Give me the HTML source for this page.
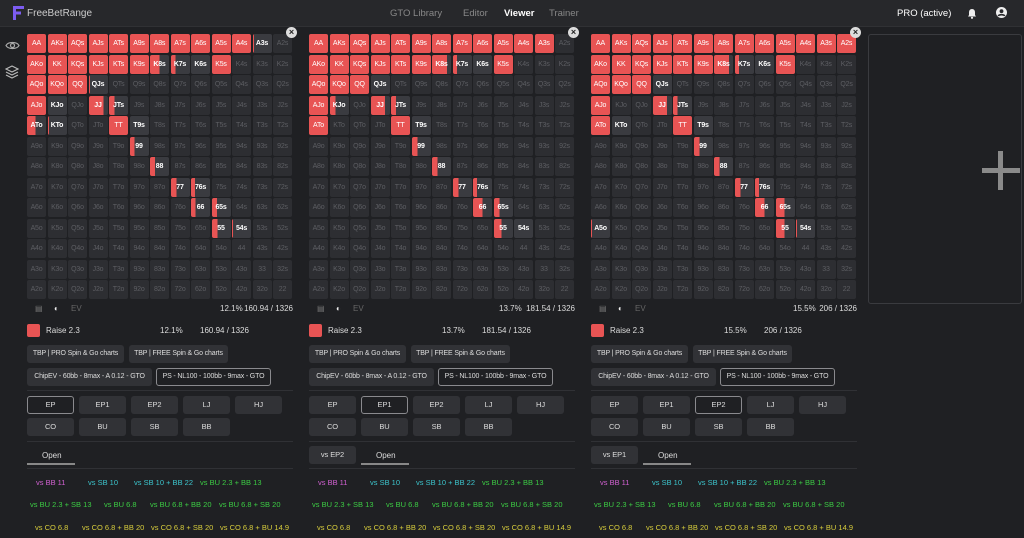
<!DOCTYPE html>
<html><head><meta charset="utf-8"><style>
*{box-sizing:border-box;margin:0;padding:0}
body{width:1024px;height:538px;background:#1f2023;font-family:"Liberation Sans",sans-serif;color:#ddd;position:relative;overflow:hidden}
.hdr{position:absolute;left:0;top:0;width:1024px;height:27px;background:#27282b;border-bottom:1px solid #303134}
.hdr span{position:absolute;top:8px;font-size:9.5px;color:#888}
.p{position:absolute;top:34px;width:266px;height:504px}
.g{display:grid;grid-template-columns:repeat(13,19px);grid-auto-rows:19px;gap:1.5px}
.g i{font-style:normal;font-size:7px;color:#5d5e63;background:#2d2e32;border-radius:2px;display:flex;align-items:center;justify-content:center;letter-spacing:-.2px}
.g i.r{background:#e85454;color:#fff}
.g i.w{background:#3a3b40;color:#fff;font-weight:bold}
.g i.q{color:#fff;font-weight:bold;background:linear-gradient(90deg,#e85454 var(--f),#3a3b40 0)}
.x{position:absolute;left:259px;top:-7px;width:11px;height:11px;border-radius:50%;background:#ddd;color:#222;font-size:9px;line-height:11px;text-align:center;font-weight:bold}
.ft{position:absolute;top:270px;left:0;width:266px;height:14px;font-size:7.5px}
.sm{font-size:8px;position:absolute}
.b{position:absolute;height:18px;background:#313236;border-radius:3px;font-size:7.5px;color:#ddd;line-height:18px;text-align:center;white-space:nowrap;letter-spacing:-.1px}
.b.t{font-size:7px;letter-spacing:-.15px}
.b.o{background:#1f2023;border:1px solid #8a8a8e;line-height:16px}
.hr{position:absolute;left:0;width:266px;height:1px;background:#303135}
.l{position:absolute;font-size:7.5px;white-space:nowrap}
.m{color:#d060d0}.c{color:#3cc4cc}.gr{color:#3ccc44}.y{color:#d6cc3c}
</style></head><body>
<div class="hdr">
<svg style="position:absolute;left:13px;top:6px" width="11" height="14" viewBox="0 0 11 14"><rect x="0" y="0" width="3" height="14" fill="#7c5cf0"/><rect x="0" y="0" width="11" height="3" fill="#7c5cf0"/><rect x="0" y="5.5" width="8" height="3" fill="#7c5cf0"/></svg>
<span style="left:27px;color:#ccc;font-size:10px">FreeBetRange</span>
<span style="left:390px">GTO Library</span>
<span style="left:463px">Editor</span>
<span style="left:504px;color:#fff;font-weight:bold">Viewer</span>
<span style="left:549px">Trainer</span>
<span style="left:897px;color:#fff;font-size:9.5px">PRO (active)</span>
<svg style="position:absolute;left:967px;top:8px" width="10" height="11" viewBox="0 0 10 11"><path d="M5 1C3 1 2 2.5 2 4.5V7L1 8.5H9L8 7V4.5C8 2.5 7 1 5 1Z" fill="#eee"/><circle cx="5" cy="9.8" r="1.1" fill="#eee"/></svg>
<svg style="position:absolute;left:996px;top:7px" width="11" height="11" viewBox="0 0 11 11"><circle cx="5.5" cy="5.5" r="5.5" fill="#eee"/><circle cx="5.5" cy="4.2" r="1.9" fill="#27282b"/><path d="M2.3 9C3 7.3 8 7.3 8.7 9" stroke="#27282b" stroke-width="1.6" fill="none"/></svg>
</div>
<svg style="position:absolute;left:5px;top:40px" width="15" height="11" viewBox="0 0 15 11"><path d="M1 5.5C3 1.5 12 1.5 14 5.5C12 9.5 3 9.5 1 5.5Z" stroke="#aaa" fill="none" stroke-width="1.2"/><circle cx="7.5" cy="5.5" r="2" stroke="#aaa" fill="none" stroke-width="1.2"/></svg>
<svg style="position:absolute;left:5px;top:65px" width="14" height="14" viewBox="0 0 14 14"><path d="M7 1L13 4L7 7L1 4Z M1 7L7 10L13 7 M1 10L7 13L13 10" stroke="#bbb" fill="none" stroke-width="1.1"/></svg>

<!-- Panel 1 -->
<div class="p" style="left:27px">
<div class="x">×</div>
<div class="g">
<i class="r">AA</i><i class="r">AKs</i><i class="r">AQs</i><i class="r">AJs</i><i class="r">ATs</i><i class="r">A9s</i><i class="r">A8s</i><i class="r">A7s</i><i class="r">A6s</i><i class="r">A5s</i><i class="r">A4s</i><i class="q" style="--f:5%">A3s</i><i>A2s</i>
<i class="r">AKo</i><i class="r">KK</i><i class="r">KQs</i><i class="r">KJs</i><i class="r">KTs</i><i class="r">K9s</i><i class="q" style="--f:50%">K8s</i><i class="q" style="--f:25%">K7s</i><i class="w">K6s</i><i class="r">K5s</i><i>K4s</i><i>K3s</i><i>K2s</i>
<i class="r">AQo</i><i class="r">KQo</i><i class="r">QQ</i><i class="q" style="--f:6%">QJs</i><i>QTs</i><i>Q9s</i><i>Q8s</i><i>Q7s</i><i>Q6s</i><i>Q5s</i><i>Q4s</i><i>Q3s</i><i>Q2s</i>
<i class="r">AJo</i><i class="w">KJo</i><i>QJo</i><i class="q" style="--f:75%">JJ</i><i class="q" style="--f:30%">JTs</i><i>J9s</i><i>J8s</i><i>J7s</i><i>J6s</i><i>J5s</i><i>J4s</i><i>J3s</i><i>J2s</i>
<i class="q" style="--f:45%">ATo</i><i class="q" style="--f:4%">KTo</i><i>QTo</i><i>JTo</i><i class="r">TT</i><i class="w">T9s</i><i>T8s</i><i>T7s</i><i>T6s</i><i>T5s</i><i>T4s</i><i>T3s</i><i>T2s</i>
<i>A9o</i><i>K9o</i><i>Q9o</i><i>J9o</i><i>T9o</i><i class="q" style="--f:25%">99</i><i>98s</i><i>97s</i><i>96s</i><i>95s</i><i>94s</i><i>93s</i><i>92s</i>
<i>A8o</i><i>K8o</i><i>Q8o</i><i>J8o</i><i>T8o</i><i>98o</i><i class="q" style="--f:25%">88</i><i>87s</i><i>86s</i><i>85s</i><i>84s</i><i>83s</i><i>82s</i>
<i>A7o</i><i>K7o</i><i>Q7o</i><i>J7o</i><i>T7o</i><i>97o</i><i>87o</i><i class="q" style="--f:30%">77</i><i class="q" style="--f:20%">76s</i><i>75s</i><i>74s</i><i>73s</i><i>72s</i>
<i>A6o</i><i>K6o</i><i>Q6o</i><i>J6o</i><i>T6o</i><i>96o</i><i>86o</i><i>76o</i><i class="q" style="--f:25%">66</i><i class="q" style="--f:25%">65s</i><i>64s</i><i>63s</i><i>62s</i>
<i>A5o</i><i>K5o</i><i>Q5o</i><i>J5o</i><i>T5o</i><i>95o</i><i>85o</i><i>75o</i><i>65o</i><i class="q" style="--f:30%">55</i><i class="q" style="--f:4%">54s</i><i>53s</i><i>52s</i>
<i>A4o</i><i>K4o</i><i>Q4o</i><i>J4o</i><i>T4o</i><i>94o</i><i>84o</i><i>74o</i><i>64o</i><i>54o</i><i>44</i><i>43s</i><i>42s</i>
<i>A3o</i><i>K3o</i><i>Q3o</i><i>J3o</i><i>T3o</i><i>93o</i><i>83o</i><i>73o</i><i>63o</i><i>53o</i><i>43o</i><i>33</i><i>32s</i>
<i>A2o</i><i>K2o</i><i>Q2o</i><i>J2o</i><i>T2o</i><i>92o</i><i>82o</i><i>72o</i><i>62o</i><i>52o</i><i>42o</i><i>32o</i><i>22</i>
</div>
<div class="ft"><span class="sm" style="left:8px;color:#777">▤</span><span class="sm" style="left:27px;color:#eee">◐</span><span class="sm" style="left:44px;color:#666">EV</span><span class="sm" style="left:193px">12.1%</span><span class="sm" style="right:0">160.94 / 1326</span></div>
<div style="position:absolute;left:0;top:290px;width:13px;height:13px;background:#e85454;border-radius:2px"></div>
<span class="sm" style="left:19px;top:292px">Raise 2.3</span><span class="sm" style="left:133px;top:292px">12.1%</span><span class="sm" style="left:173px;top:292px">160.94 / 1326</span>
<div class="b t" style="left:0;top:311px;width:97px">TBP | PRO Spin &amp; Go charts</div>
<div class="b t" style="left:102px;top:311px;width:99px">TBP | FREE Spin &amp; Go charts</div>
<div class="b t" style="left:0;top:334px;width:125px">ChipEV - 60bb - 8max - A 0.12 - GTO</div>
<div class="b t o" style="left:129px;top:334px;width:115px">PS - NL100 - 100bb - 9max - GTO</div>
<div class="hr" style="top:356px"></div>
<div class="b o" style="left:0;top:362px;width:47px">EP</div><div class="b" style="left:52px;top:362px;width:47px">EP1</div><div class="b" style="left:104px;top:362px;width:47px">EP2</div><div class="b" style="left:156px;top:362px;width:47px">LJ</div><div class="b" style="left:208px;top:362px;width:47px">HJ</div>
<div class="b" style="left:0;top:384px;width:47px">CO</div><div class="b" style="left:52px;top:384px;width:47px">BU</div><div class="b" style="left:104px;top:384px;width:47px">SB</div><div class="b" style="left:156px;top:384px;width:47px">BB</div>
<div class="hr" style="top:407px"></div>
<span class="sm" style="left:15px;top:417px">Open</span><div style="position:absolute;left:0;top:429px;width:48px;height:2px;background:#888"></div>
<div class="hr" style="top:434px"></div>
<span class="l m" style="left:9px;top:444px">vs BB 11</span><span class="l c" style="left:61px;top:444px">vs SB 10</span><span class="l c" style="left:107px;top:444px">vs SB 10 + BB 22</span><span class="l gr" style="left:173px;top:444px">vs BU 2.3 + BB 13</span>
<span class="l gr" style="left:3px;top:466px">vs BU 2.3 + SB 13</span><span class="l gr" style="left:77px;top:466px">vs BU 6.8</span><span class="l gr" style="left:123px;top:466px">vs BU 6.8 + BB 20</span><span class="l gr" style="left:192px;top:466px">vs BU 6.8 + SB 20</span>
<span class="l y" style="left:8px;top:489px">vs CO 6.8</span><span class="l y" style="left:55px;top:489px">vs CO 6.8 + BB 20</span><span class="l y" style="left:124px;top:489px">vs CO 6.8 + SB 20</span><span class="l y" style="left:193px;top:489px">vs CO 6.8 + BU 14.9</span>
</div>

<!-- Panel 2 -->
<div class="p" style="left:309px">
<div class="x">×</div>
<div class="g">
<i class="r">AA</i><i class="r">AKs</i><i class="r">AQs</i><i class="r">AJs</i><i class="r">ATs</i><i class="r">A9s</i><i class="r">A8s</i><i class="r">A7s</i><i class="r">A6s</i><i class="r">A5s</i><i class="r">A4s</i><i class="r">A3s</i><i>A2s</i>
<i class="r">AKo</i><i class="r">KK</i><i class="r">KQs</i><i class="r">KJs</i><i class="r">KTs</i><i class="r">K9s</i><i class="q" style="--f:80%">K8s</i><i class="q" style="--f:20%">K7s</i><i class="w">K6s</i><i class="r">K5s</i><i>K4s</i><i>K3s</i><i>K2s</i>
<i class="r">AQo</i><i class="r">KQo</i><i class="r">QQ</i><i class="w">QJs</i><i>QTs</i><i>Q9s</i><i>Q8s</i><i>Q7s</i><i>Q6s</i><i>Q5s</i><i>Q4s</i><i>Q3s</i><i>Q2s</i>
<i class="r">AJo</i><i class="q" style="--f:30%">KJo</i><i>QJo</i><i class="q" style="--f:75%">JJ</i><i class="q" style="--f:25%">JTs</i><i>J9s</i><i>J8s</i><i>J7s</i><i>J6s</i><i>J5s</i><i>J4s</i><i>J3s</i><i>J2s</i>
<i class="r">ATo</i><i>KTo</i><i>QTo</i><i>JTo</i><i class="r">TT</i><i class="w">T9s</i><i>T8s</i><i>T7s</i><i>T6s</i><i>T5s</i><i>T4s</i><i>T3s</i><i>T2s</i>
<i>A9o</i><i>K9o</i><i>Q9o</i><i>J9o</i><i>T9o</i><i class="q" style="--f:30%">99</i><i>98s</i><i>97s</i><i>96s</i><i>95s</i><i>94s</i><i>93s</i><i>92s</i>
<i>A8o</i><i>K8o</i><i>Q8o</i><i>J8o</i><i>T8o</i><i>98o</i><i class="q" style="--f:30%">88</i><i>87s</i><i>86s</i><i>85s</i><i>84s</i><i>83s</i><i>82s</i>
<i>A7o</i><i>K7o</i><i>Q7o</i><i>J7o</i><i>T7o</i><i>97o</i><i>87o</i><i class="q" style="--f:30%">77</i><i class="q" style="--f:20%">76s</i><i>75s</i><i>74s</i><i>73s</i><i>72s</i>
<i>A6o</i><i>K6o</i><i>Q6o</i><i>J6o</i><i>T6o</i><i>96o</i><i>86o</i><i>76o</i><i class="q" style="--f:50%">66</i><i class="q" style="--f:30%">65s</i><i>64s</i><i>63s</i><i>62s</i>
<i>A5o</i><i>K5o</i><i>Q5o</i><i>J5o</i><i>T5o</i><i>95o</i><i>85o</i><i>75o</i><i>65o</i><i class="q" style="--f:40%">55</i><i class="w">54s</i><i>53s</i><i>52s</i>
<i>A4o</i><i>K4o</i><i>Q4o</i><i>J4o</i><i>T4o</i><i>94o</i><i>84o</i><i>74o</i><i>64o</i><i>54o</i><i>44</i><i>43s</i><i>42s</i>
<i>A3o</i><i>K3o</i><i>Q3o</i><i>J3o</i><i>T3o</i><i>93o</i><i>83o</i><i>73o</i><i>63o</i><i>53o</i><i>43o</i><i>33</i><i>32s</i>
<i>A2o</i><i>K2o</i><i>Q2o</i><i>J2o</i><i>T2o</i><i>92o</i><i>82o</i><i>72o</i><i>62o</i><i>52o</i><i>42o</i><i>32o</i><i>22</i>
</div>
<div class="ft"><span class="sm" style="left:8px;color:#777">▤</span><span class="sm" style="left:27px;color:#eee">◐</span><span class="sm" style="left:44px;color:#666">EV</span><span class="sm" style="left:190px">13.7%</span><span class="sm" style="right:0">181.54 / 1326</span></div>
<div style="position:absolute;left:0;top:290px;width:13px;height:13px;background:#e85454;border-radius:2px"></div>
<span class="sm" style="left:19px;top:292px">Raise 2.3</span><span class="sm" style="left:133px;top:292px">13.7%</span><span class="sm" style="left:173px;top:292px">181.54 / 1326</span>
<div class="b t" style="left:0;top:311px;width:97px">TBP | PRO Spin &amp; Go charts</div>
<div class="b t" style="left:102px;top:311px;width:99px">TBP | FREE Spin &amp; Go charts</div>
<div class="b t" style="left:0;top:334px;width:125px">ChipEV - 60bb - 8max - A 0.12 - GTO</div>
<div class="b t o" style="left:129px;top:334px;width:115px">PS - NL100 - 100bb - 9max - GTO</div>
<div class="hr" style="top:356px"></div>
<div class="b" style="left:0;top:362px;width:47px">EP</div><div class="b o" style="left:52px;top:362px;width:47px">EP1</div><div class="b" style="left:104px;top:362px;width:47px">EP2</div><div class="b" style="left:156px;top:362px;width:47px">LJ</div><div class="b" style="left:208px;top:362px;width:47px">HJ</div>
<div class="b" style="left:0;top:384px;width:47px">CO</div><div class="b" style="left:52px;top:384px;width:47px">BU</div><div class="b" style="left:104px;top:384px;width:47px">SB</div><div class="b" style="left:156px;top:384px;width:47px">BB</div>
<div class="hr" style="top:407px"></div>
<div class="b" style="left:0;top:412px;width:47px">vs EP2</div>
<span class="sm" style="left:67px;top:417px">Open</span><div style="position:absolute;left:52px;top:429px;width:48px;height:2px;background:#888"></div>
<div class="hr" style="top:434px"></div>
<span class="l m" style="left:9px;top:444px">vs BB 11</span><span class="l c" style="left:61px;top:444px">vs SB 10</span><span class="l c" style="left:107px;top:444px">vs SB 10 + BB 22</span><span class="l gr" style="left:173px;top:444px">vs BU 2.3 + BB 13</span>
<span class="l gr" style="left:3px;top:466px">vs BU 2.3 + SB 13</span><span class="l gr" style="left:77px;top:466px">vs BU 6.8</span><span class="l gr" style="left:123px;top:466px">vs BU 6.8 + BB 20</span><span class="l gr" style="left:192px;top:466px">vs BU 6.8 + SB 20</span>
<span class="l y" style="left:8px;top:489px">vs CO 6.8</span><span class="l y" style="left:55px;top:489px">vs CO 6.8 + BB 20</span><span class="l y" style="left:124px;top:489px">vs CO 6.8 + SB 20</span><span class="l y" style="left:193px;top:489px">vs CO 6.8 + BU 14.9</span>
</div>

<!-- Panel 3 -->
<div class="p" style="left:591px">
<div class="x">×</div>
<div class="g">
<i class="r">AA</i><i class="r">AKs</i><i class="r">AQs</i><i class="r">AJs</i><i class="r">ATs</i><i class="r">A9s</i><i class="r">A8s</i><i class="r">A7s</i><i class="r">A6s</i><i class="r">A5s</i><i class="r">A4s</i><i class="r">A3s</i><i class="r">A2s</i>
<i class="r">AKo</i><i class="r">KK</i><i class="r">KQs</i><i class="r">KJs</i><i class="r">KTs</i><i class="r">K9s</i><i class="q" style="--f:80%">K8s</i><i class="q" style="--f:20%">K7s</i><i class="w">K6s</i><i class="r">K5s</i><i>K4s</i><i>K3s</i><i>K2s</i>
<i class="r">AQo</i><i class="r">KQo</i><i class="r">QQ</i><i class="w">QJs</i><i>QTs</i><i>Q9s</i><i>Q8s</i><i>Q7s</i><i>Q6s</i><i>Q5s</i><i>Q4s</i><i>Q3s</i><i>Q2s</i>
<i class="r">AJo</i><i>KJo</i><i>QJo</i><i class="q" style="--f:75%">JJ</i><i class="q" style="--f:25%">JTs</i><i>J9s</i><i>J8s</i><i>J7s</i><i>J6s</i><i>J5s</i><i>J4s</i><i>J3s</i><i>J2s</i>
<i class="r">ATo</i><i class="w">KTo</i><i>QTo</i><i>JTo</i><i class="r">TT</i><i class="w">T9s</i><i>T8s</i><i>T7s</i><i>T6s</i><i>T5s</i><i>T4s</i><i>T3s</i><i>T2s</i>
<i>A9o</i><i>K9o</i><i>Q9o</i><i>J9o</i><i>T9o</i><i class="q" style="--f:30%">99</i><i>98s</i><i>97s</i><i>96s</i><i>95s</i><i>94s</i><i>93s</i><i>92s</i>
<i>A8o</i><i>K8o</i><i>Q8o</i><i>J8o</i><i>T8o</i><i>98o</i><i class="q" style="--f:30%">88</i><i>87s</i><i>86s</i><i>85s</i><i>84s</i><i>83s</i><i>82s</i>
<i>A7o</i><i>K7o</i><i>Q7o</i><i>J7o</i><i>T7o</i><i>97o</i><i>87o</i><i class="q" style="--f:30%">77</i><i class="q" style="--f:20%">76s</i><i>75s</i><i>74s</i><i>73s</i><i>72s</i>
<i>A6o</i><i>K6o</i><i>Q6o</i><i>J6o</i><i>T6o</i><i>96o</i><i>86o</i><i>76o</i><i class="q" style="--f:50%">66</i><i class="q" style="--f:45%">65s</i><i>64s</i><i>63s</i><i>62s</i>
<i class="q" style="--f:6%">A5o</i><i>K5o</i><i>Q5o</i><i>J5o</i><i>T5o</i><i>95o</i><i>85o</i><i>75o</i><i>65o</i><i class="q" style="--f:45%">55</i><i class="q" style="--f:6%">54s</i><i>53s</i><i>52s</i>
<i>A4o</i><i>K4o</i><i>Q4o</i><i>J4o</i><i>T4o</i><i>94o</i><i>84o</i><i>74o</i><i>64o</i><i>54o</i><i>44</i><i>43s</i><i>42s</i>
<i>A3o</i><i>K3o</i><i>Q3o</i><i>J3o</i><i>T3o</i><i>93o</i><i>83o</i><i>73o</i><i>63o</i><i>53o</i><i>43o</i><i>33</i><i>32s</i>
<i>A2o</i><i>K2o</i><i>Q2o</i><i>J2o</i><i>T2o</i><i>92o</i><i>82o</i><i>72o</i><i>62o</i><i>52o</i><i>42o</i><i>32o</i><i>22</i>
</div>
<div class="ft"><span class="sm" style="left:8px;color:#777">▤</span><span class="sm" style="left:27px;color:#eee">◐</span><span class="sm" style="left:44px;color:#666">EV</span><span class="sm" style="left:202px">15.5%</span><span class="sm" style="right:0">206 / 1326</span></div>
<div style="position:absolute;left:0;top:290px;width:13px;height:13px;background:#e85454;border-radius:2px"></div>
<span class="sm" style="left:19px;top:292px">Raise 2.3</span><span class="sm" style="left:133px;top:292px">15.5%</span><span class="sm" style="left:173px;top:292px">206 / 1326</span>
<div class="b t" style="left:0;top:311px;width:97px">TBP | PRO Spin &amp; Go charts</div>
<div class="b t" style="left:102px;top:311px;width:99px">TBP | FREE Spin &amp; Go charts</div>
<div class="b t" style="left:0;top:334px;width:125px">ChipEV - 60bb - 8max - A 0.12 - GTO</div>
<div class="b t o" style="left:129px;top:334px;width:115px">PS - NL100 - 100bb - 9max - GTO</div>
<div class="hr" style="top:356px"></div>
<div class="b" style="left:0;top:362px;width:47px">EP</div><div class="b" style="left:52px;top:362px;width:47px">EP1</div><div class="b o" style="left:104px;top:362px;width:47px">EP2</div><div class="b" style="left:156px;top:362px;width:47px">LJ</div><div class="b" style="left:208px;top:362px;width:47px">HJ</div>
<div class="b" style="left:0;top:384px;width:47px">CO</div><div class="b" style="left:52px;top:384px;width:47px">BU</div><div class="b" style="left:104px;top:384px;width:47px">SB</div><div class="b" style="left:156px;top:384px;width:47px">BB</div>
<div class="hr" style="top:407px"></div>
<div class="b" style="left:0;top:412px;width:47px">vs EP1</div>
<span class="sm" style="left:67px;top:417px">Open</span><div style="position:absolute;left:52px;top:429px;width:48px;height:2px;background:#888"></div>
<div class="hr" style="top:434px"></div>
<span class="l m" style="left:9px;top:444px">vs BB 11</span><span class="l c" style="left:61px;top:444px">vs SB 10</span><span class="l c" style="left:107px;top:444px">vs SB 10 + BB 22</span><span class="l gr" style="left:173px;top:444px">vs BU 2.3 + BB 13</span>
<span class="l gr" style="left:3px;top:466px">vs BU 2.3 + SB 13</span><span class="l gr" style="left:77px;top:466px">vs BU 6.8</span><span class="l gr" style="left:123px;top:466px">vs BU 6.8 + BB 20</span><span class="l gr" style="left:192px;top:466px">vs BU 6.8 + SB 20</span>
<span class="l y" style="left:8px;top:489px">vs CO 6.8</span><span class="l y" style="left:55px;top:489px">vs CO 6.8 + BB 20</span><span class="l y" style="left:124px;top:489px">vs CO 6.8 + SB 20</span><span class="l y" style="left:193px;top:489px">vs CO 6.8 + BU 14.9</span>
</div>

<!-- Add panel -->
<div style="position:absolute;left:868px;top:34px;width:154px;height:270px;border:1px solid #3a3b3f;border-radius:3px;background:#1f2023"></div>
<div style="position:absolute;left:982px;top:168px;width:38px;height:5px;background:#8a8a8a"></div>
<div style="position:absolute;left:998px;top:151px;width:5px;height:39px;background:#8a8a8a"></div>
</body></html>
